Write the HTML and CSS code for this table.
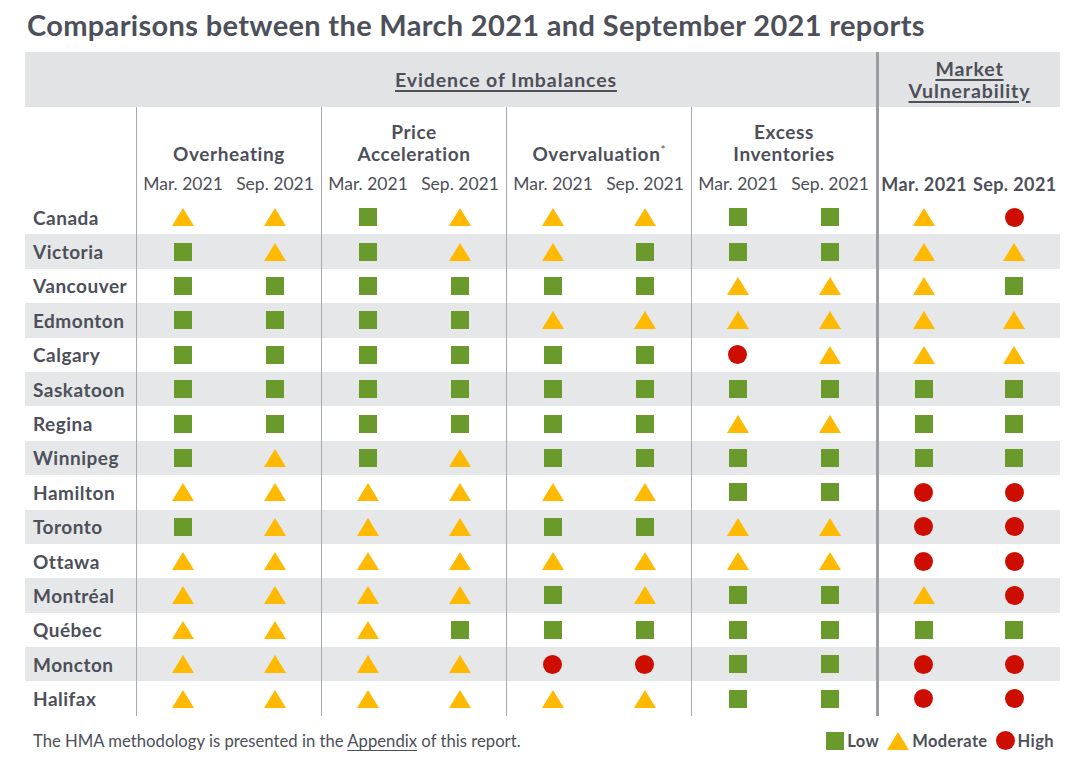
FILE: index.html
```html
<!DOCTYPE html>
<html lang="en">
<head>
<meta charset="utf-8">
<title>Comparisons between the March 2021 and September 2021 reports</title>
<link rel="stylesheet" href="styles.css">
</head>
<body>
<div class="page">
  <h1 class="title">Comparisons between the March 2021 and September 2021 reports</h1>
  <div class="table">
    <div class="row band">
      <div class="cell"></div>
      <div class="cell band-main"><span class="ul">Evidence of Imbalances</span></div>
      <div class="cell band-market sep-thick"><span class="ul">Market </span><span class="ul">Vulnerability</span></div>
    </div>
    <div class="row subhead">
      <div class="cell"></div>
      <div class="cell group sep">
        <div class="gtitle">Overheating</div>
        <div class="sublabels"><span>Mar. 2021</span><span>Sep. 2021</span></div>
      </div>
      <div class="cell group sep">
        <div class="gtitle">Price<br>Acceleration</div>
        <div class="sublabels"><span>Mar. 2021</span><span>Sep. 2021</span></div>
      </div>
      <div class="cell group sep">
        <div class="gtitle">Overvaluation<sup class="ast">*</sup></div>
        <div class="sublabels"><span>Mar. 2021</span><span>Sep. 2021</span></div>
      </div>
      <div class="cell group sep">
        <div class="gtitle">Excess<br>Inventories</div>
        <div class="sublabels"><span>Mar. 2021</span><span>Sep. 2021</span></div>
      </div>
      <div class="cell group sep-thick">
        <div class="sublabels bold"><span>Mar. 2021</span><span>Sep. 2021</span></div>
      </div>
    </div>
    <div id="rows"></div>
  </div>
  <div class="footer">
    <div class="note">The HMA methodology is presented in the <span class="link">Appendix</span> of this report.</div>
    <div class="legend">
      <span class="lg"><i class="ic sq"></i>Low</span>
      <span class="lg"><i class="ic tri"></i>Moderate</span>
      <span class="lg"><i class="ic cir"></i>High</span>
    </div>
  </div>
</div>
<script src="script.js"></script>
</body>
</html>
```
FILE: script.js
```js
var data = [
  ["Canada",    "TTSTTTSSTC"],
  ["Victoria",  "STSTTSSSTT"],
  ["Vancouver", "SSSSSSTTTS"],
  ["Edmonton",  "SSSSTTTTTT"],
  ["Calgary",   "SSSSSSCTTT"],
  ["Saskatoon", "SSSSSSSSSS"],
  ["Regina",    "SSSSSSTTSS"],
  ["Winnipeg",  "STSTSSSSSS"],
  ["Hamilton",  "TTTTTTSSCC"],
  ["Toronto",   "STTTSSTTCC"],
  ["Ottawa",    "TTTTTTTTCC"],
  ["Montréal",  "TTTTSTSSTC"],
  ["Québec",    "TTTSSSSSSS"],
  ["Moncton",   "TTTTCCSSCC"],
  ["Halifax",   "TTTTTTSSCC"]
];
var cls = { S: "sq", T: "tri", C: "cir" };
var wrap = document.getElementById("rows");
data.forEach(function (r, i) {
  var row = document.createElement("div");
  row.className = "row data" + (i % 2 === 1 ? " alt" : "");
  var name = document.createElement("div");
  name.className = "cell city";
  name.textContent = r[0];
  row.appendChild(name);
  for (var k = 0; k < 10; k++) {
    var c = document.createElement("div");
    var extra = "";
    if (k === 8) extra = " sep-thick";
    else if (k % 2 === 0) extra = " sep";
    c.className = "cell mark" + extra;
    var ic = document.createElement("i");
    ic.className = "ic " + cls[r[1].charAt(k)];
    c.appendChild(ic);
    row.appendChild(c);
  }
  wrap.appendChild(row);
});
```
FILE: styles.css
```css
* { box-sizing: border-box; }
html, body { margin: 0; padding: 0; background: #ffffff; }
body {
  font-family: Lato, "Open Sans", "DejaVu Sans", sans-serif;
  color: #4d4f59;
}
.page { padding-left: 25px; width: 1074px; }
.title {
  margin: 0;
  padding: 8px 0 0 2px;
  height: 52px;
  font-size: 29px;
  line-height: 34px;
  font-weight: 700;
  letter-spacing: 0.33px;
  color: #4d4f59;
  white-space: nowrap;
}
.table { width: 1035px; }
.row {
  display: grid;
  grid-template-columns: 111px repeat(8, 92.5px) 92px 92px;
}
.cell { min-width: 0; }
.sep { border-left: 1px solid #a9aaae; }
.sep-thick { border-left: 3px solid #9b9ca1; }

.band { background: #e2e3e5; height: 55px; }
.band-main {
  grid-column: 2 / 10;
  display: flex; align-items: center; justify-content: center;
  font-size: 19.5px; font-weight: 700; letter-spacing: 0.9px;
}
.band-market {
  grid-column: 10 / 12;
  display: flex; flex-direction: column; align-items: center; justify-content: center;
  font-size: 19.5px; font-weight: 700; line-height: 22px; text-align: center; letter-spacing: 0.9px;
}
.ul { text-decoration: underline; text-decoration-thickness: 1.5px; text-underline-offset: 3px; }

.subhead { height: 93px; }
.group {
  grid-column: span 2;
  display: flex; flex-direction: column; justify-content: flex-end;
  padding-bottom: 5px;
  text-align: center;
}
.gtitle {
  font-size: 19px; font-weight: 700; line-height: 22px; letter-spacing: 0.6px;
  margin-bottom: 8px;
}
.ast { font-size: 12px; vertical-align: top; line-height: 12px; position: relative; top: 1px; letter-spacing: 0; font-weight: 400; }
.sublabels {
  display: grid; grid-template-columns: 1fr 1fr;
  font-size: 17.5px; line-height: 22px; white-space: nowrap;
}
.sublabels.bold { font-weight: 700; font-size: 18px; letter-spacing: 0.4px; }

.data { height: 34.4px; }
.data.alt { background: #e6e7e9; }
.city {
  display: flex; align-items: center;
  padding-left: 8px;
  font-size: 19px; font-weight: 700; letter-spacing: 0.5px;
}
.mark { display: flex; align-items: center; justify-content: center; }

.ic { display: inline-block; flex: none; }
.ic.sq { width: 18px; height: 18px; background: #6a9a2b; }
.ic.tri {
  width: 0; height: 0;
  border-left: 11px solid transparent;
  border-right: 11px solid transparent;
  border-bottom: 18px solid #ffb900;
}
.ic.cir { width: 19px; height: 19px; border-radius: 50%; background: #cc0d00; }

.footer {
  width: 1035px;
  display: flex; justify-content: space-between; align-items: center;
  margin-top: 15px;
}
.note { padding-left: 8px; font-size: 16.7px; line-height: 20px; }
.link { text-decoration: underline; text-decoration-thickness: 1px; text-underline-offset: 3px; }
.legend { display: flex; align-items: center; padding-right: 6px; font-size: 16.5px; font-weight: 700; letter-spacing: 0.4px; }
.lg { display: flex; align-items: center; margin-left: 8px; }
.lg .ic { margin-right: 3px; }
```
